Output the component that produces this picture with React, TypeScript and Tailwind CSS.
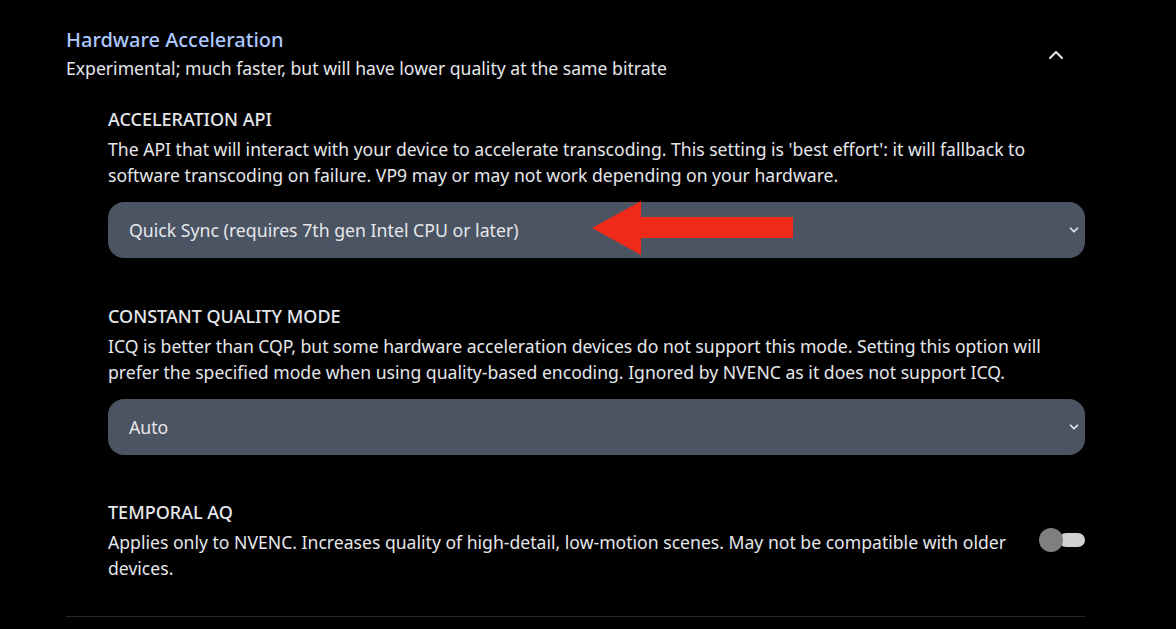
import { ChevronDown, ChevronUp } from "lucide-react";

function SettingLabel({ title, children }: { title: string; children: React.ReactNode }) {
  return (
    <div>
      <p className="text-[18px] leading-[26px] font-medium uppercase text-[#e5e7eb]">{title}</p>
      <p className="mt-[4px] text-[17.6px] leading-[26px] text-[#e5e7eb]">{children}</p>
    </div>
  );
}

function Select({ value, children }: { value: string; children?: React.ReactNode }) {
  return (
    <div className="relative mt-[14px]">
      <select
        defaultValue={value}
        className="h-[56px] w-full appearance-none rounded-2xl bg-[#4b5462] pl-[21px] pr-10 text-[17.7px] text-[#e5e7eb] outline-none"
      >
        <option>{value}</option>
      </select>
      <ChevronDown className="pointer-events-none absolute right-[4px] top-[21px] h-[14px] w-[14px] text-[#e5e7eb]" strokeWidth={3} />
      {children}
    </div>
  );
}

export default function App() {
  return (
    <div className="min-h-screen bg-black pt-[26px] pl-[66px] pr-[91px]" style={{ fontFamily: '"Noto Sans", sans-serif' }}>
      <div className="flex items-start justify-between">
        <div>
          <h2 className="text-[20px] leading-[28px] font-medium text-[#adc8ff]">Hardware Acceleration</h2>
          <p className="mt-[1px] text-[17.6px] leading-[26px] text-[#e5e7eb]">
            Experimental; much faster, but will have lower quality at the same bitrate
          </p>
        </div>
        <button className="mt-[17px] mr-[17px] text-[#e5e7eb]">
          <ChevronUp className="h-6 w-6" strokeWidth={2} />
        </button>
      </div>

      <div className="pl-[42px] pt-[25px]">
        <SettingLabel title="Acceleration API">
          The API that will interact with your device to accelerate transcoding. This setting is 'best effort': it will fallback to software transcoding on failure. VP9 may or may not work depending on your hardware.
        </SettingLabel>
        <Select value="Quick Sync (requires 7th gen Intel CPU or later)">
          <svg className="pointer-events-none absolute left-[484px] top-[-2px]" width="204" height="58" viewBox="0 0 204 58">
            <polygon points="0,28 49,1 49,17 201,17 201,38 49,38 49,55" fill="#ef2a19" />
          </svg>
        </Select>

        <div className="mt-[45px]">
          <SettingLabel title="Constant quality mode">
            ICQ is better than CQP, but some hardware acceleration devices do not support this mode. Setting this option will prefer the specified mode when using quality-based encoding. Ignored by NVENC as it does not support ICQ.
          </SettingLabel>
          <Select value="Auto" />
        </div>

        <div className="mt-[44px] flex items-center justify-between gap-8">
          <SettingLabel title="Temporal AQ">
            Applies only to NVENC. Increases quality of high-detail, low-motion scenes. May not be compatible with older devices.
          </SettingLabel>
          <div className="relative flex h-6 w-[46px] shrink-0 items-center">
            <div className="ml-[20px] h-[14px] w-[26px] rounded-full bg-[#d1d1d1]" />
            <div className="absolute left-0 top-0 h-6 w-6 rounded-full bg-[#7f7f7f]" />
          </div>
        </div>
      </div>

      <div className="mt-[35px] h-px bg-[#262626]" />
    </div>
  );
}
